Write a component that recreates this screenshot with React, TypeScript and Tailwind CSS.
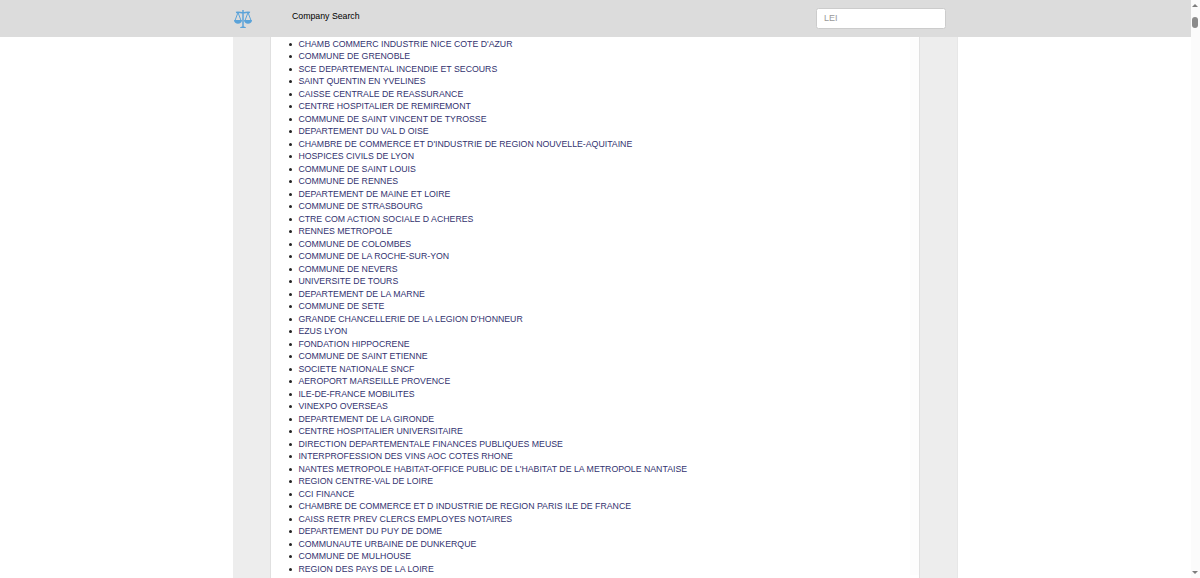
import React from 'react';

const companies: string[] = [
  "CHAMB COMMERC INDUSTRIE NICE COTE D'AZUR",
  'COMMUNE DE GRENOBLE',
  'SCE DEPARTEMENTAL INCENDIE ET SECOURS',
  'SAINT QUENTIN EN YVELINES',
  'CAISSE CENTRALE DE REASSURANCE',
  'CENTRE HOSPITALIER DE REMIREMONT',
  'COMMUNE DE SAINT VINCENT DE TYROSSE',
  'DEPARTEMENT DU VAL D OISE',
  "CHAMBRE DE COMMERCE ET D'INDUSTRIE DE REGION NOUVELLE-AQUITAINE",
  'HOSPICES CIVILS DE LYON',
  'COMMUNE DE SAINT LOUIS',
  'COMMUNE DE RENNES',
  'DEPARTEMENT DE MAINE ET LOIRE',
  'COMMUNE DE STRASBOURG',
  'CTRE COM ACTION SOCIALE D ACHERES',
  'RENNES METROPOLE',
  'COMMUNE DE COLOMBES',
  'COMMUNE DE LA ROCHE-SUR-YON',
  'COMMUNE DE NEVERS',
  'UNIVERSITE DE TOURS',
  'DEPARTEMENT DE LA MARNE',
  'COMMUNE DE SETE',
  "GRANDE CHANCELLERIE DE LA LEGION D'HONNEUR",
  'EZUS LYON',
  'FONDATION HIPPOCRENE',
  'COMMUNE DE SAINT ETIENNE',
  'SOCIETE NATIONALE SNCF',
  'AEROPORT MARSEILLE PROVENCE',
  'ILE-DE-FRANCE MOBILITES',
  'VINEXPO OVERSEAS',
  'DEPARTEMENT DE LA GIRONDE',
  'CENTRE HOSPITALIER UNIVERSITAIRE',
  'DIRECTION DEPARTEMENTALE FINANCES PUBLIQUES MEUSE',
  'INTERPROFESSION DES VINS AOC COTES RHONE',
  "NANTES METROPOLE HABITAT-OFFICE PUBLIC DE L'HABITAT DE LA METROPOLE NANTAISE",
  'REGION CENTRE-VAL DE LOIRE',
  'CCI FINANCE',
  'CHAMBRE DE COMMERCE ET D INDUSTRIE DE REGION PARIS ILE DE FRANCE',
  'CAISS RETR PREV CLERCS EMPLOYES NOTAIRES',
  'DEPARTEMENT DU PUY DE DOME',
  'COMMUNAUTE URBAINE DE DUNKERQUE',
  'COMMUNE DE MULHOUSE',
  'REGION DES PAYS DE LA LOIRE',
];

const ScalesLogo: React.FC = () => (
  <svg className="w-[18px] h-[18px]" viewBox="0 0 36 36" fill="none" stroke="#5ba3d9" strokeWidth="3">
    <path d="M18 0v34M4 5c6-2 9 1 14 1s8-3 14-1" />
    <path d="M8 5L2 21M8 5l6 16M28 5l-6 16M28 5l6 16" strokeWidth="2" />
    <path d="M0 20h16c0 10-16 10-16 0zM20 20h16c0 10-16 10-16 0z" fill="#5ba3d9" stroke="none" />
    <path d="M12 36c0-4 12-4 12 0z" fill="#5ba3d9" stroke="none" />
  </svg>
);

const Scrollbar: React.FC = () => (
  <div className="w-[9.5px] h-full shrink-0 bg-[#fbfbfb] flex flex-col items-center justify-between">
    <div className="flex flex-col items-center pt-1">
      <svg className="w-[6px] h-[3px]" viewBox="0 0 6 3" fill="#7d7d7d"><path d="M3 0l3 3H0z" /></svg>
      <div className="mt-[10px] w-[6px] h-[11px] rounded-full bg-[#8b8b8b]"></div>
    </div>
    <svg className="w-[6px] h-[3px] mb-1" viewBox="0 0 6 3" fill="#7d7d7d"><path d="M3 3l3-3H0z" /></svg>
  </div>
);

const App: React.FC = () => {
  return (
    <div className="h-[578px] flex overflow-hidden bg-white text-black font-['Liberation_Sans',Arial,sans-serif] text-[8.75px] leading-[12.5px]">
      <div className="flex-1 flex flex-col">
        <header className="h-[37px] shrink-0 bg-[#dcdcdc] flex items-start pl-[233px]">
          <a href="#" className="mt-[10px] w-[59px] pl-[1px]"><ScalesLogo /></a>
          <a href="#" className="mt-[9.5px] w-[524px]">Company Search</a>
          <input
            type="text"
            placeholder="LEI"
            className="mt-2 w-[130px] h-[21px] px-[7px] pb-[1.5px] rounded-[2.5px] border border-[#cccccc] bg-white text-[9px] placeholder:text-[#999999] outline-none"
          />
        </header>

        <main className="flex-1 min-h-0 ml-[233px] w-[725px] px-[37px] bg-[#ededed] border-r border-[#e7e7e7]">
          <div className="h-full bg-white border-x border-[#e0e0e0] pl-[18px] pt-[0.6px]">
            <ul className="border-r-[9px] border-[#fdfdfd]">
              {companies.map((name) => (
                <li key={name} className="flex items-center">
                  <span className="w-[3px] h-[3px] mt-[1px] mr-[6.4px] rounded-full bg-[#222222]"></span>
                  <a href="#" className="text-[#32326f] whitespace-nowrap">{name}</a>
                </li>
              ))}
            </ul>
          </div>
        </main>
      </div>
      <Scrollbar />
    </div>
  );
};

export default App;
